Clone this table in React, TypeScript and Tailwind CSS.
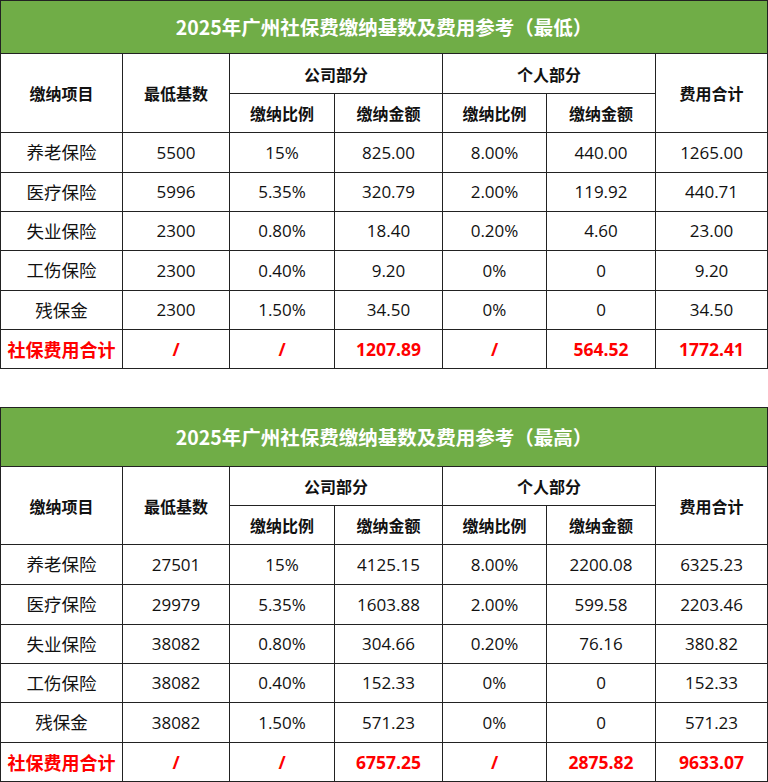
import React from "react";

type Row = string[];

const t1: Row[] = [
  ["养老保险", "5500", "15%", "825.00", "8.00%", "440.00", "1265.00"],
  ["医疗保险", "5996", "5.35%", "320.79", "2.00%", "119.92", "440.71"],
  ["失业保险", "2300", "0.80%", "18.40", "0.20%", "4.60", "23.00"],
  ["工伤保险", "2300", "0.40%", "9.20", "0%", "0", "9.20"],
  ["残保金", "2300", "1.50%", "34.50", "0%", "0", "34.50"],
];
const t1Total: Row = ["社保费用合计", "/", "/", "1207.89", "/", "564.52", "1772.41"];

const t2: Row[] = [
  ["养老保险", "27501", "15%", "4125.15", "8.00%", "2200.08", "6325.23"],
  ["医疗保险", "29979", "5.35%", "1603.88", "2.00%", "599.58", "2203.46"],
  ["失业保险", "38082", "0.80%", "304.66", "0.20%", "76.16", "380.82"],
  ["工伤保险", "38082", "0.40%", "152.33", "0%", "0", "152.33"],
  ["残保金", "38082", "1.50%", "571.23", "0%", "0", "571.23"],
];
const t2Total: Row = ["社保费用合计", "/", "/", "6757.25", "/", "2875.82", "9633.07"];

const cell = "border border-[#222] text-center align-middle p-0";
const hd = "text-[16px] font-bold text-[#111] font-['Noto_Sans_CJK_SC',sans-serif]";

function Table({
  title,
  titleH,
  h1,
  h2,
  rows,
  rowH,
  total,
  totalH,
}: {
  title: string;
  titleH: string;
  h1: string;
  h2: string;
  rows: Row[];
  rowH: string[];
  total: Row;
  totalH: string;
}) {
  return (
    <table className="w-[767px] table-fixed border-collapse font-['Open_Sans','Noto_Sans_CJK_SC',sans-serif]">
      <colgroup>
        <col className="w-[122px]" />
        <col className="w-[107px]" />
        <col className="w-[105px]" />
        <col className="w-[108px]" />
        <col className="w-[104px]" />
        <col className="w-[109px]" />
        <col className="w-[112px]" />
      </colgroup>
      <thead>
        <tr>
          <th
            colSpan={7}
            className={`${cell} ${titleH} bg-[#70ad47] text-white text-[19.5px] font-bold font-['Noto_Sans_CJK_SC',sans-serif]`}
          >
            {title}
          </th>
        </tr>
        <tr className={h1}>
          <th rowSpan={2} className={`${cell} ${hd}`}>
            缴纳项目
          </th>
          <th rowSpan={2} className={`${cell} ${hd}`}>
            最低基数
          </th>
          <th colSpan={2} className={`${cell} ${h1} ${hd}`}>
            公司部分
          </th>
          <th colSpan={2} className={`${cell} ${h1} ${hd}`}>
            个人部分
          </th>
          <th rowSpan={2} className={`${cell} ${hd}`}>
            费用合计
          </th>
        </tr>
        <tr>
          {["缴纳比例", "缴纳金额", "缴纳比例", "缴纳金额"].map((t, i) => (
            <th key={i} className={`${cell} ${h2} ${hd}`}>
              {t}
            </th>
          ))}
        </tr>
      </thead>
      <tbody>
        {rows.map((r, ri) => (
          <tr key={ri}>
            {r.map((c, ci) => (
              <td
                key={ci}
                className={`${cell} ${rowH[ri]} text-[#111] ${
                  ci === 0 ? "text-[17.5px] font-['Noto_Sans_CJK_SC',sans-serif]" : "text-[17px]"
                }`}
              >
                {c}
              </td>
            ))}
          </tr>
        ))}
        <tr>
          {total.map((c, ci) => (
            <td
              key={ci}
              className={`${cell} ${totalH} font-bold text-[#ff0000] ${
                ci === 0 ? "text-[18px] font-['Noto_Sans_CJK_SC',sans-serif]" : "text-[17.5px]"
              }`}
            >
              {c}
            </td>
          ))}
        </tr>
      </tbody>
    </table>
  );
}

export default function App() {
  return (
    <div className="w-[768px] h-[782px] bg-white flex flex-col gap-[38px] overflow-hidden">
      <Table
        title="2025年广州社保费缴纳基数及费用参考（最低）"
        titleH="h-[53px]"
        h1="h-[40px]"
        h2="h-[39px]"
        rows={t1}
        rowH={["h-[40px]", "h-[39px]", "h-[39px]", "h-[40px]", "h-[39px]"]}
        total={t1Total}
        totalH="h-[39px]"
      />
      <Table
        title="2025年广州社保费缴纳基数及费用参考（最高）"
        titleH="h-[59px]"
        h1="h-[39px]"
        h2="h-[39px]"
        rows={t2}
        rowH={["h-[40px]", "h-[40px]", "h-[39px]", "h-[39px]", "h-[40px]"]}
        total={t2Total}
        totalH="h-[39px]"
      />
    </div>
  );
}
